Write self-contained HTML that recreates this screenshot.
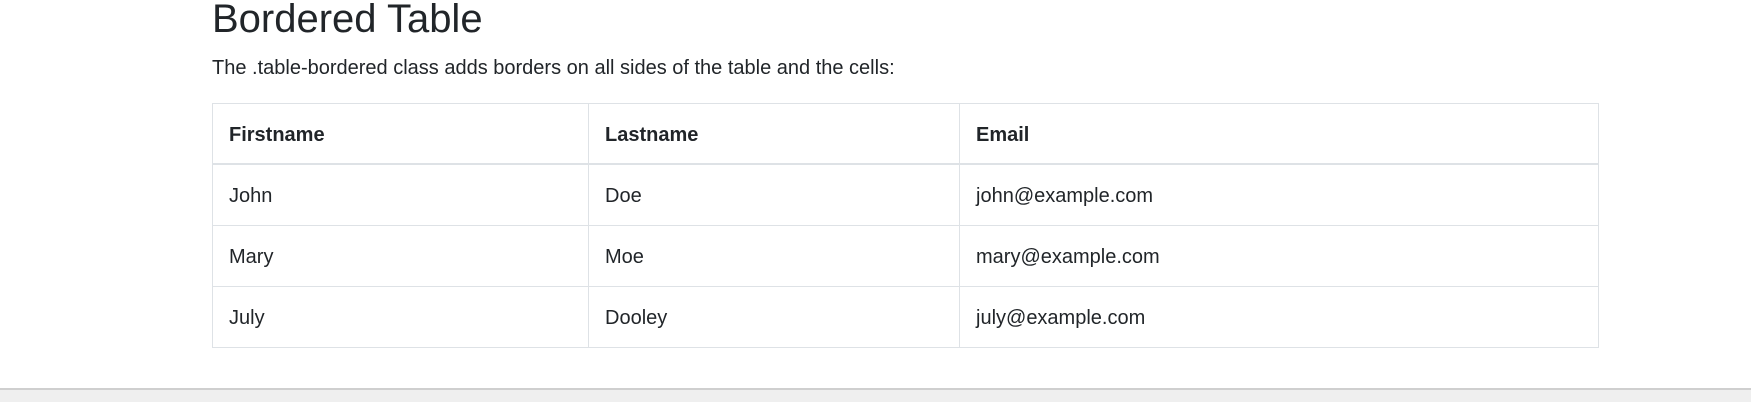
<!DOCTYPE html>
<html><head><style>
html,body{margin:0;padding:0;width:1751px;height:400px;overflow:hidden;background:#fff;font-family:"Liberation Sans",sans-serif;color:#212529;}
h2{position:absolute;left:212px;top:-5px;margin:0;font-size:40px;font-weight:400;line-height:48px;}
p{position:absolute;left:212px;top:55px;margin:0;font-size:20px;line-height:26px;}
table{position:absolute;left:212px;top:103px;width:1387px;border-collapse:collapse;font-size:20px;}
td,th{border:1px solid #dee2e6;padding:2px 16px 0 16px;text-align:left;height:58px;line-height:24px;}
th{font-weight:700;border-bottom:2px solid #dee2e6;height:57px;}
.bar{position:absolute;left:0;top:388px;width:1751px;height:12px;background:#efefef;border-top:2px solid #cfcfcf;}
</style></head><body>
<h2>Bordered Table</h2>
<p>The .table-bordered class adds borders on all sides of the table and the cells:</p>
<table>
<colgroup><col style="width:376px"><col style="width:371px"><col></colgroup>
<tr><th>Firstname</th><th>Lastname</th><th>Email</th></tr>
<tr><td>John</td><td>Doe</td><td>john@example.com</td></tr>
<tr><td>Mary</td><td>Moe</td><td>mary@example.com</td></tr>
<tr><td>July</td><td>Dooley</td><td>july@example.com</td></tr>
</table>
<div class="bar"></div>
</body></html>
